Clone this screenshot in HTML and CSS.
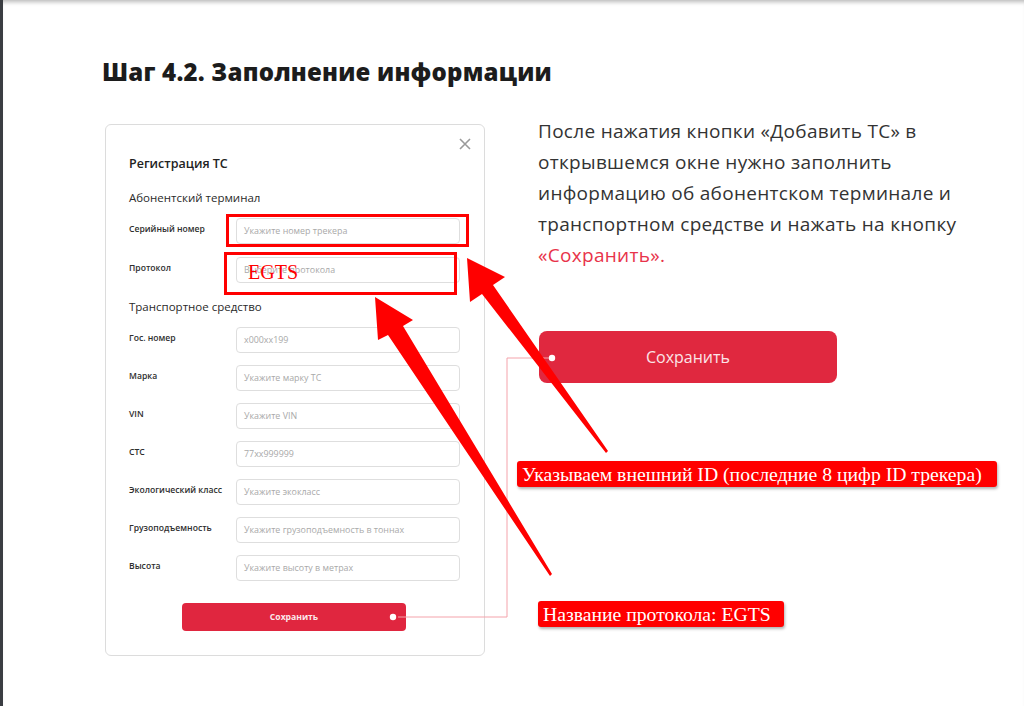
FILE: index.html
```html
<!DOCTYPE html>
<html lang="ru">
<head>
<meta charset="utf-8">
<title>Шаг 4.2. Заполнение информации</title>
<link rel="stylesheet" href="styles.css">
</head>
<body>
<div class="page">
  <h1 class="title">Шаг 4.2. Заполнение информации</h1>
  <div class="main">
    <div class="card">
      <svg class="close" width="12" height="12" viewBox="0 0 12 12"><path d="M1 1L11 11M11 1L1 11" stroke="#9a9a9a" stroke-width="1.6" fill="none"/></svg>
      <div class="card-title">Регистрация ТС</div>
      <div class="section first">Абонентский терминал</div>
      <div class="rows tight">
        <div class="label">Серийный номер</div><div class="input">Укажите номер трекера</div>
        <div class="label">Протокол</div><div class="input">Выберите протокола</div>
      </div>
      <div class="section second">Транспортное средство</div>
      <div class="rows">
        <div class="label">Гос. номер</div><div class="input">x000xx199</div>
        <div class="label">Марка</div><div class="input">Укажите марку ТС</div>
        <div class="label">VIN</div><div class="input">Укажите VIN</div>
        <div class="label">СТС</div><div class="input">77xx999999</div>
        <div class="label">Экологический класс</div><div class="input">Укажите экокласс</div>
        <div class="label">Грузоподъемность</div><div class="input">Укажите грузоподъемность в тоннах</div>
        <div class="label">Высота</div><div class="input">Укажите высоту в метрах</div>
      </div>
      <div class="btn-small">Сохранить</div>
    </div>
    <div class="desc">
      <p class="text">После нажатия кнопки «Добавить ТС» в<br>открывшемся окне нужно заполнить<br>информацию об абонентском терминале и<br>транспортном средстве и нажать на кнопку<br><span class="accent">«Сохранить».</span></p>
      <div class="btn-big">Сохранить</div>
    </div>
  </div>
</div>

<div class="overlay">
  <svg class="marks" width="1024" height="706" viewBox="0 0 1024 706">
    <rect x="227.5" y="215.5" width="240" height="30" fill="none" stroke="#ff0000" stroke-width="3"/>
    <rect x="225.5" y="253.5" width="230" height="40" fill="none" stroke="#ff0000" stroke-width="3"/>
    <polyline points="398,617 507,617 507,358 552,358" fill="none" stroke="#f4a3ab" stroke-width="1"/>
    <circle cx="393" cy="617" r="3.2" fill="#ffffff"/>
    <circle cx="552" cy="358" r="3.2" fill="#ffffff"/>
    <polygon points="467,258 505,277 493,285 608,451 606,453 482,294 470,302" fill="#ff0000"/>
    <polygon points="375,297 413,320 403,326 552,574 550,576 388,335 378,340" fill="#ff0000"/>
  </svg>
  <span class="egts">EGTS</span>
  <div class="note note-id">Указываем внешний ID (последние 8 цифр ID трекера)</div>
  <div class="note note-proto">Название протокола: EGTS</div>
</div>
</body>
</html>
```

FILE: styles.css
```css
html, body {
  margin: 0;
  padding: 0;
  background: #ffffff;
}
body {
  position: relative;
  width: 1024px;
  height: 706px;
  overflow: hidden;
  font-family: "Open Sans", "Noto Sans", sans-serif;
  color: #222;
}
.page {
  box-sizing: border-box;
  width: 1024px;
  height: 706px;
  border-left: 3px solid #3a3d42;
  box-shadow: inset 0 5px 4px -3px rgba(0,0,0,0.28);
  padding: 57px 0 0 99px;
}
.title {
  margin: 0;
  font-size: 24px;
  line-height: 30px;
  font-weight: 800;
  color: #1c1c1c;
  letter-spacing: 0.2px;
}
.main {
  display: flex;
  align-items: flex-start;
  margin-top: 29px;
}
.card {
  position: relative;
  box-sizing: border-box;
  width: 380px;
  height: 532px;
  margin-top: 8px;
  margin-left: 3px;
  border: 1px solid #dcdcdc;
  border-radius: 6px;
  padding: 31px 23px 0 23px;
  display: flex;
  flex-direction: column;
}
.close {
  position: absolute;
  top: 13px;
  right: 13px;
}
.card-title {
  font-size: 12.5px;
  line-height: 16px;
  font-weight: 600;
  color: #222;
}
.section {
  font-size: 11.5px;
  line-height: 16px;
  font-weight: 500;
  color: #2a2a2a;
}
.section.first { margin-top: 18px; }
.section.second { margin-top: 16px; }
.rows {
  display: grid;
  grid-template-columns: 107px 224px;
  row-gap: 12px;
  margin-top: 12px;
}
.rows.tight { row-gap: 13px; }
.label {
  font-size: 8.6px;
  line-height: 11px;
  font-weight: 600;
  color: #2e2e2e;
  padding-top: 6px;
  white-space: nowrap;
}
.input {
  box-sizing: border-box;
  height: 26px;
  border: 1px solid #dedede;
  border-radius: 4px;
  padding-left: 7px;
  font-size: 8.9px;
  line-height: 24px;
  color: #a9a9a9;
  white-space: nowrap;
  overflow: hidden;
}
.btn-small {
  box-sizing: border-box;
  width: 224px;
  height: 28px;
  margin: 22px 0 0 53px;
  background: #e0263f;
  border-radius: 4px;
  color: #fbe9eb;
  font-size: 8.6px;
  font-weight: 700;
  line-height: 28px;
  text-align: center;
}
.desc {
  margin-left: 53px;
}
.text {
  margin: 0;
  font-size: 19px;
  line-height: 31px;
  font-weight: 500;
  color: #333;
  letter-spacing: 0.3px;
  white-space: nowrap;
}
.accent { color: #e8334a; }
.btn-big {
  box-sizing: border-box;
  width: 298px;
  height: 52px;
  margin: 60px 0 0 1px;
  background: #e0283f;
  border-radius: 8px;
  color: #fbe4e7;
  font-size: 16px;
  font-weight: 500;
  line-height: 52px;
  text-align: center;
}
.overlay {
  position: absolute;
  left: 0;
  top: 0;
  width: 1024px;
  height: 706px;
  pointer-events: none;
}
.marks {
  position: absolute;
  left: 0;
  top: 0;
}
.egts {
  position: absolute;
  left: 248px;
  top: 260px;
  font-family: "Liberation Serif", serif;
  font-size: 20px;
  line-height: 24px;
  color: #ff0000;
}
.note {
  position: absolute;
  box-sizing: border-box;
  height: 26px;
  background: #ff0000;
  border-radius: 3px;
  box-shadow: 1px 2px 3px rgba(0,0,0,0.3);
  color: #ffffff;
  font-family: "Liberation Serif", serif;
  font-size: 19.7px;
  line-height: 26px;
  padding-left: 5px;
  white-space: nowrap;
}
.note-id {
  left: 517px;
  top: 461px;
  width: 480px;
}
.note-proto {
  left: 538px;
  top: 601px;
  width: 246px;
}
```
